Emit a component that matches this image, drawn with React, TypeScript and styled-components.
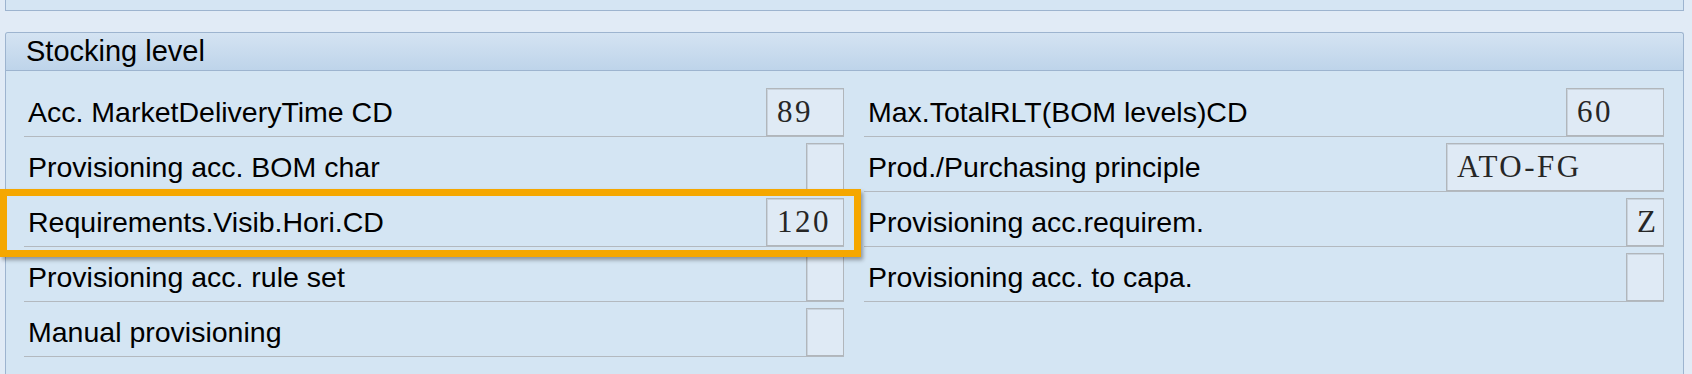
import React from "react";
import styled, { createGlobalStyle } from "styled-components";

const GlobalStyle = createGlobalStyle`
  html, body {
    margin: 0;
    padding: 0;
    background: #e1ebf6;
    font-family: "Liberation Sans", Arial, sans-serif;
    overflow: hidden;
  }
`;

const Page = styled.div`
  width: 1692px;
  height: 374px;
  box-sizing: border-box;
  padding: 0 8px 0 5px;
  display: flex;
  flex-direction: column;
`;

const TopPanel = styled.div`
  height: 11px;
  box-sizing: border-box;
  background: #d5e5f3;
  border: 1px solid #9db4cf;
  border-top: none;
`;

const Section = styled.section`
  margin-top: 21px;
  flex: 1;
  background: #d4e5f3;
  border: 1px solid #9db4cf;
  border-bottom: none;
  border-radius: 3px 3px 0 0;
  display: flex;
  flex-direction: column;
`;

const Header = styled.div`
  height: 37px;
  border-bottom: 1px solid #9db4cf;
  border-radius: 3px 3px 0 0;
  background: linear-gradient(#d4e3f2, #bed4ea);
  padding-left: 20px;
  font-size: 29px;
  line-height: 37px;
  color: #000;
`;

const Body = styled.div`
  padding: 11px 19px 0 18px;
  display: grid;
  grid-template-columns: 820px 800px;
  column-gap: 20px;
  align-items: start;
`;

const Column = styled.div`
  display: flex;
  flex-direction: column;
`;

const Row = styled.div<{ $highlight?: boolean }>`
  position: relative;
  height: 55px;
  box-sizing: border-box;
  border-bottom: 1px solid #b3b9bf;
  display: flex;
  align-items: flex-end;
  padding-left: 4px;

  ${(p) =>
    p.$highlight &&
    `
    &::after {
      content: "";
      position: absolute;
      top: -3px;
      left: -24px;
      right: -17px;
      bottom: -11px;
      border: 7px solid #f5a700;
      box-shadow: 2px 3px 4px rgba(0, 0, 0, 0.35);
      pointer-events: none;
      z-index: 2;
    }
  `}
`;

const Label = styled.span`
  flex: 1;
  font-size: 28.5px;
  line-height: 48px;
  color: #000;
  white-space: nowrap;
`;

const Field = styled.div<{ $chars: number }>`
  width: ${(p) => p.$chars * 20 + 18}px;
  height: 48px;
  box-sizing: border-box;
  background: #dfeaf5;
  border: 1px solid #b1b6bb;
  box-shadow: inset 1px 1px 0 #c9d3dd;
  padding-left: 10px;
  font-family: "Liberation Serif", "Times New Roman", serif;
  font-size: 31px;
  letter-spacing: 2.5px;
  line-height: 46px;
  color: #262626;
  white-space: nowrap;
`;

type Item = { label: string; value?: string; chars: number; highlight?: boolean };

const left: Item[] = [
  { label: "Acc. MarketDeliveryTime CD", value: "89", chars: 3 },
  { label: "Provisioning acc. BOM char", chars: 1 },
  { label: "Requirements.Visib.Hori.CD", value: "120", chars: 3, highlight: true },
  { label: "Provisioning acc. rule set", chars: 1 },
  { label: "Manual provisioning", chars: 1 },
];

const right: Item[] = [
  { label: "Max.TotalRLT(BOM levels)CD", value: "60", chars: 4 },
  { label: "Prod./Purchasing principle", value: "ATO-FG", chars: 10 },
  { label: "Provisioning acc.requirem.", value: "Z", chars: 1 },
  { label: "Provisioning acc. to capa.", chars: 1 },
];

const renderRows = (items: Item[]) =>
  items.map((it) => (
    <Row key={it.label} $highlight={it.highlight}>
      <Label>{it.label}</Label>
      <Field $chars={it.chars}>{it.value ?? ""}</Field>
    </Row>
  ));

export default function App() {
  return (
    <>
      <GlobalStyle />
      <Page>
        <TopPanel />
        <Section>
          <Header>Stocking level</Header>
          <Body>
            <Column>{renderRows(left)}</Column>
            <Column>{renderRows(right)}</Column>
          </Body>
        </Section>
      </Page>
    </>
  );
}
